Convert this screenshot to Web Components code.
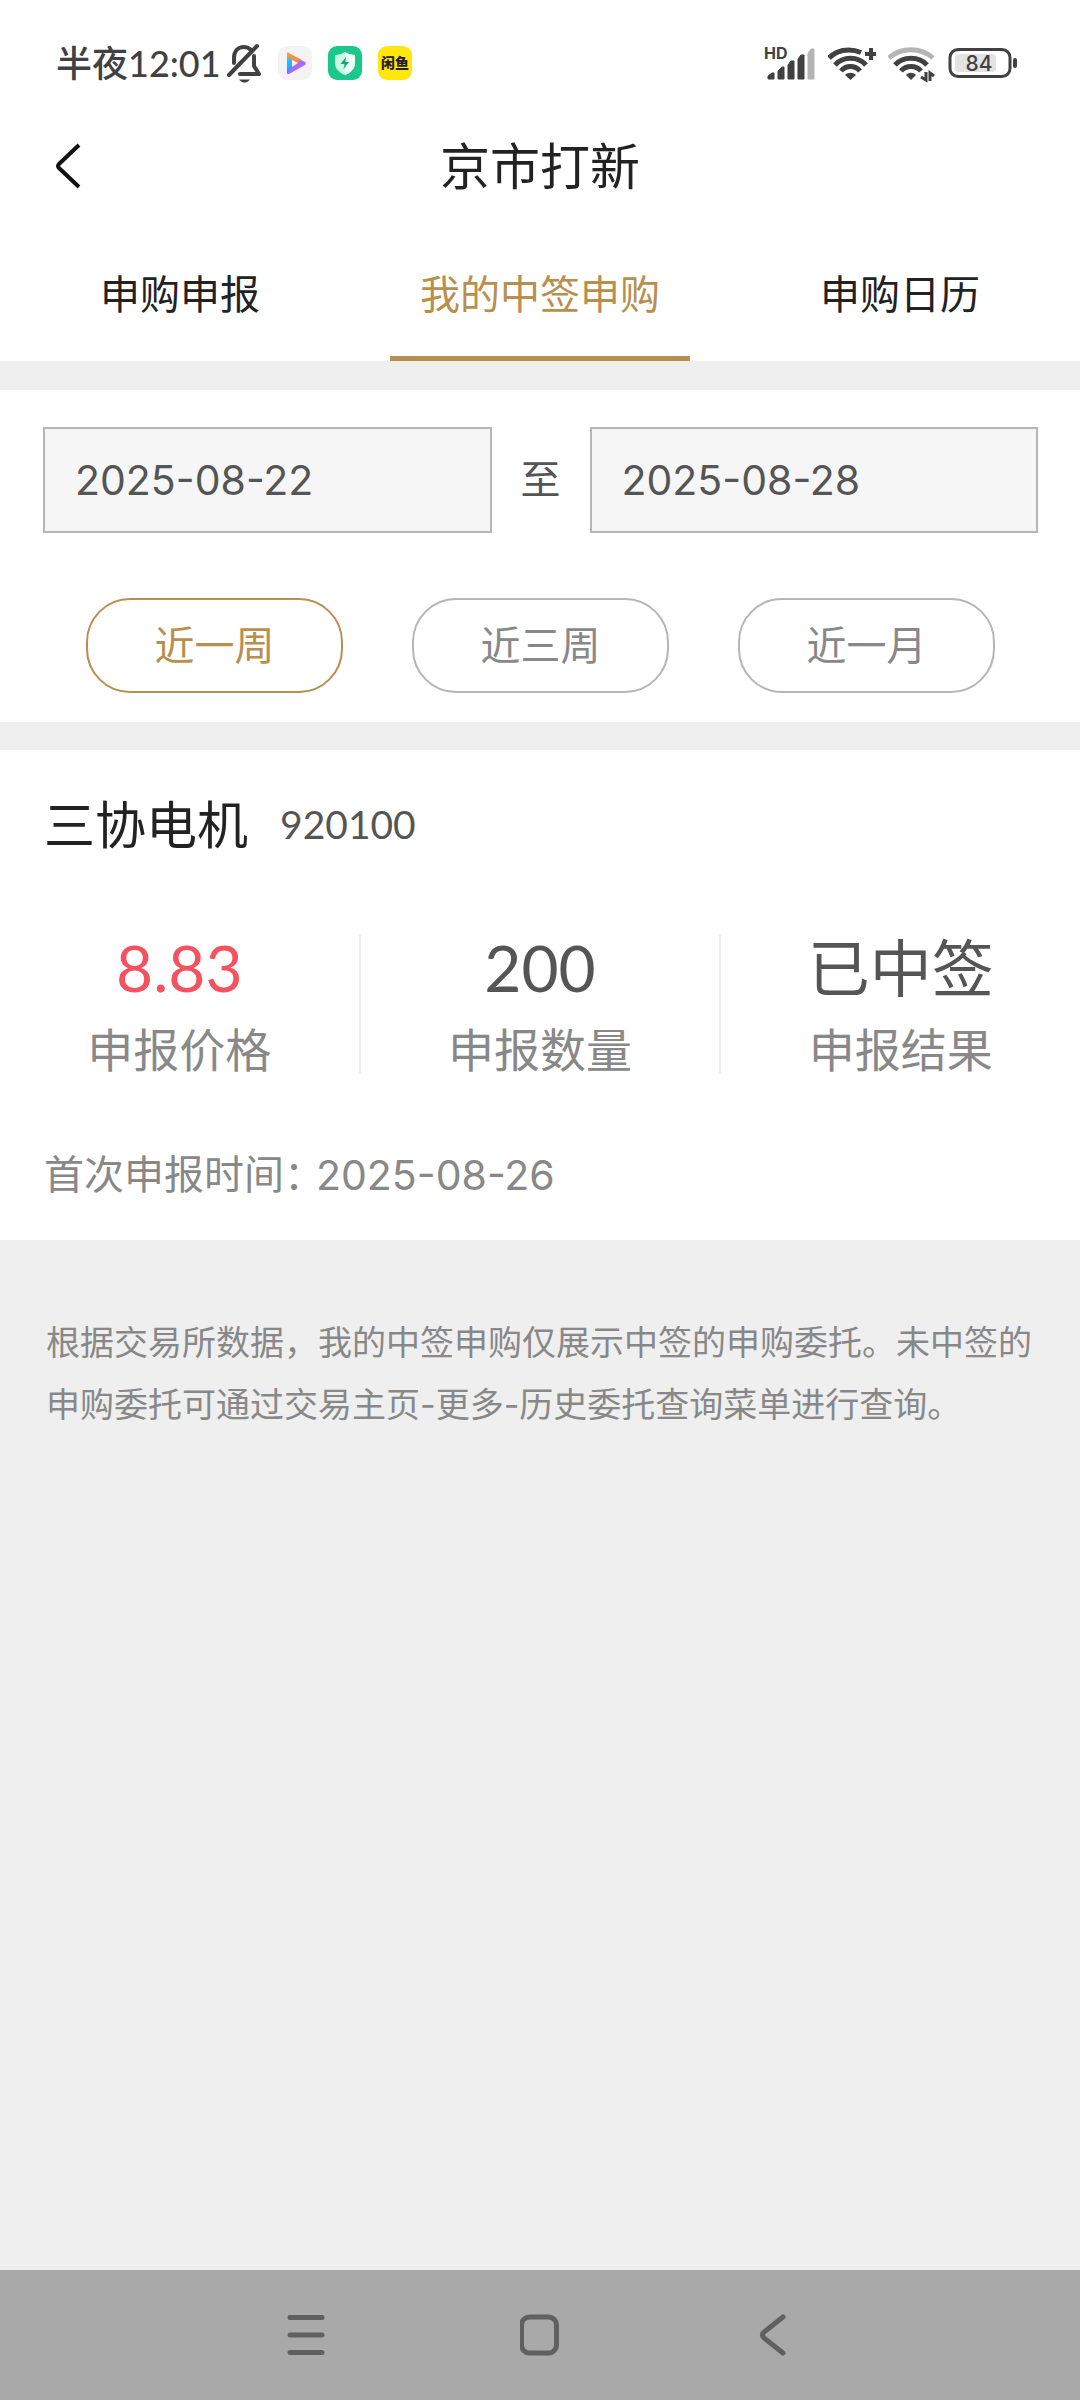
<!DOCTYPE html>
<html lang="zh-CN">
<head>
<meta charset="utf-8">
<meta name="viewport" content="width=device-width, initial-scale=1">
<title>京市打新</title>
<style>
  :root {
    --gold: #b98f50;
    --ink: #222;
    --text: #555;
    --muted: #888;
    --line: #b5b5b5;
    --page: #efefef;
    --num: Lato, "Noto Sans CJK SC", sans-serif;
    --date: Inter, "Noto Sans CJK SC", sans-serif;
  }
  html, body { margin: 0; }
  body { font-family: Inter, "Noto Sans CJK SC", sans-serif; background: var(--page); color: var(--ink); }
</style>
</head>
<body>
<ipo-app></ipo-app>
<script>
  const define = (name, html, setup) => {
    const template = document.createElement('template');
    template.innerHTML = '<style>*{box-sizing:border-box}button{font:inherit;color:inherit;background:none;border:0;padding:0;margin:0}svg{display:block;flex:none}</style>' + html;
    customElements.define(name, class extends HTMLElement {
      constructor() {
        super();
        this.attachShadow({ mode: 'open' }).append(template.content.cloneNode(true));
      }
      connectedCallback() { if (setup) setup(this, this.shadowRoot); }
    });
  };

  define('status-bar', `
    <style>
      :host { display: flex; justify-content: space-between; align-items: center; height: 126px; padding: 0 62px 0 56px; color: #414141; }
      .side { display: flex; align-items: center; }
      .left { gap: 16px; }
      .right { gap: 12px; }
      .clock { display: flex; align-items: center; gap: 5px; font-size: 36px; line-height: 40px; }
      .clock span { font-family: Lato, "Noto Sans CJK SC", sans-serif; font-weight: 500; }
      text { font-family: Inter, "Noto Sans CJK SC", sans-serif; }
    </style>
    <div class="side left">
      <div class="clock"><span>半夜12:01</span>
        <svg width="36" height="40" viewBox="0 0 36 40" fill="none" stroke="#414141" stroke-width="4" stroke-linecap="round" stroke-linejoin="round">
          <path d="M8 20V15C8 8 12 4 18 4C21 4 23 5 25 7M28 13V23L33 31H14"/><path d="M3 32L31 3"/><path d="M13 36.500H24C22 39 20 39.500 18.500 39.500S15 39 13 36.500Z" fill="#414141" stroke="none"/>
        </svg>
      </div>
      <svg width="34" height="34" viewBox="0 0 34 34">
        <defs><linearGradient id="o" x1="0" y1="0" x2="1" y2="1"><stop stop-color="#ff9f2e"/><stop offset="1" stop-color="#ff7a52"/></linearGradient>
        <linearGradient id="b" x1="0" y1="0" x2="0" y2="1"><stop stop-color="#25d0ff"/><stop offset="1" stop-color="#318aff"/></linearGradient></defs>
        <rect width="34" height="34" rx="9" fill="#f3f3f4"/>
        <path d="M9 7C9 6 10 6 11 7L24 14L20 19L9 12Z" fill="url(#o)"/>
        <path d="M9 10L14 14V23L9 28Z" fill="url(#b)"/>
        <path d="M9 28L14 20L23 14L27 16C28 17 28 18 27 19L11 28C10 28 9 28 9 28Z" fill="#a86bf5"/>
        <path d="M14 14L20 17L14 21Z" fill="#f3f0fa"/>
      </svg>
      <svg width="34" height="34" viewBox="0 0 34 34">
        <rect width="34" height="34" rx="9" fill="#1bc88b"/>
        <path d="M17 6C20 8 23 9 27 9V17C27 23 22 27 17 29C12 27 7 23 7 17V9C11 9 14 8 17 6Z" fill="#c9fae6"/>
        <path d="M17 6C20 8 23 9 27 9V17C27 23 22 27 17 29Z" fill="#effff9"/>
        <path d="M18 11L12.500 18H16.500L15.500 23L21 16H17.500Z" fill="#16a874"/>
      </svg>
      <svg width="34" height="34" viewBox="0 0 34 34">
        <rect width="34" height="34" rx="9" fill="#ffe60f"/>
        <text x="17" y="22" text-anchor="middle" font-size="14" font-weight="900" fill="#222">闲鱼</text>
      </svg>
    </div>
    <div class="side right">
      <svg width="52" height="40" viewBox="0 0 52 40" fill="#414141">
        <text x="0" y="16" font-size="16" font-weight="700">HD</text>
        <path d="M4 36V33L8 30H10V36ZM14 36V28L18 24H20V36ZM24 36V22L27 18H30V36ZM34 36V16L37 12H40V36Z" stroke="#414141" stroke-width="1" stroke-linejoin="round"/>
        <path d="M44 36V10L47 6H50V36Z" fill="#b5b5b5" stroke="#b5b5b5" stroke-width="1" stroke-linejoin="round"/>
      </svg>
      <svg width="48" height="40" viewBox="0 0 48 40" fill="none" stroke="#414141" stroke-width="5">
        <path d="M1 15C8 8 20 4 33 9.500M7 22C15 13 30 13 38 22M13 28C18 22 27 22 32 28"/>
        <path d="M17 32C20 29 25 29 28 32L22.500 37Z" fill="#414141" stroke="none"/>
        <path d="M43 5V17M37 11H49" stroke-width="4"/>
      </svg>
      <svg width="48" height="40" viewBox="0 0 48 40" fill="none" stroke="#414141" stroke-width="5">
        <path d="M1 15C13 4 33 4 45 15" stroke="#b5b5b5"/>
        <path d="M7 22C15 13 31 13 39 22M13 28C18 22 28 22 33 28"/>
        <path d="M18 32C21 29 25 29 28 32L23 37Z" fill="#414141" stroke="none"/>
        <path d="M38 29V37L33 34M42 38V30L46 33" stroke-width="3"/>
      </svg>
      <svg width="70" height="40" viewBox="0 0 70 40">
        <rect x="2" y="6.500" width="60" height="27" rx="8" fill="none" stroke="#414141" stroke-width="3"/>
        <rect x="7" y="11" width="41" height="18" rx="4" fill="#e3e3e3"/>
        <rect x="65" y="15" width="4" height="10" rx="2" fill="#414141"/>
        <text x="31" y="28" text-anchor="middle" font-size="21" font-weight="500" fill="#414141">84</text>
      </svg>
    </div>`);

  define('title-bar', `
    <style>
      :host { display: grid; grid-template-columns: 1fr auto 1fr; align-items: center; height: 82px; padding: 0 52px; }
      button { width: 32px; height: 48px; }
      h1 { margin: 0; font-size: 50px; line-height: 60px; font-weight: 400; }
    </style>
    <button aria-label="返回"><svg width="32" height="48" viewBox="0 0 32 48" fill="none" stroke="#111" stroke-width="4"><path d="M27 2L7 21Q5 23 7 25L27 44"/></svg></button>
    <h1><slot></slot></h1>`);

  define('tab-bar', `
    <style>:host { display: flex; height: 153px; padding-top: 20px; }</style>
    <slot></slot>`);

  define('tab-item', `
    <style>
      :host { flex: 1; display: flex; justify-content: center; }
      button { position: relative; min-width: 300px; font-size: 40px; line-height: 48px; }
      :host([active]) button { color: var(--gold); }
      :host([active]) button::after { content: ""; position: absolute; left: 0; right: 0; bottom: 0; height: 5px; background: var(--gold); }
    </style>
    <button><slot></slot></button>`);

  define('date-field', `
    <style>
      :host { flex: 1; display: flex; min-width: 0; }
      input { width: 100%; height: 106px; margin: 0; padding: 0 30px; border: 2px solid var(--line); border-radius: 0; background: #f6f6f6; color: var(--text); font: 400 41px/48px var(--date); outline: 0; }
    </style>
    <input type="text" readonly>`, (host, root) => {
      const input = root.querySelector('input');
      input.value = host.getAttribute('value');
      input.setAttribute('aria-label', host.getAttribute('label'));
    });

  define('range-pill', `
    <style>
      :host { flex: 1; display: flex; }
      button { flex: 1; height: 95px; border: 2px solid var(--line); border-radius: 44px; font-size: 40px; line-height: 48px; color: var(--muted); }
      :host([active]) button { border-color: var(--gold); color: var(--gold); }
    </style>
    <button><slot></slot></button>`);

  define('date-filter', `
    <style>
      :host { display: block; background: #fff; padding: 37px 42px 29px 43px; }
      .dates { display: flex; align-items: center; gap: 29px; font-size: 40px; line-height: 48px; color: var(--text); }
      .ranges { display: flex; gap: 69px; padding: 65px 43px 0; }
    </style>
    <div class="dates">
      <date-field label="开始日期" value="2025-08-22"></date-field><span>至</span><date-field label="结束日期" value="2025-08-28"></date-field>
    </div>
    <div class="ranges"><slot></slot></div>`);

  define('stat-cell', `
    <style>
      :host { flex: 1; display: flex; flex-direction: column; align-items: center; color: var(--text); border-right: 2px solid #eee; }
      :host(:last-of-type) { border-right: 0; }
      .value { font: 400 62px/66px var(--num); }
      :host([numeric]) .value { font-size: 64px; }
      :host([tone="up"]) .value { color: #f5525f; }
      .label { font-size: 46px; line-height: 46px; padding-top: 26px; color: var(--muted); }
    </style>
    <div class="value"><slot></slot></div>
    <div class="label"><slot name="label"></slot></div>`);

  define('allotment-card', `
    <style>
      :host { display: block; background: #fff; padding: 44px 0 35px; }
      header { display: flex; align-items: flex-start; gap: 32px; padding: 0 44px; }
      h2 { margin: 0; font-size: 51px; line-height: 64px; font-weight: 400; }
      .code { font: 400 39px/60px var(--num); color: var(--text); }
      .stats { display: flex; padding: 77px 0 72px; }
      footer { display: flex; align-items: center; gap: 12px; padding: 0 44px; font-size: 40px; line-height: 60px; color: var(--muted); }
      .key { font-feature-settings: "palt"; }
      .date { font-size: 41px; }
    </style>
    <header><h2><slot name="name"></slot></h2><span class="code"><slot name="code"></slot></span></header>
    <div class="stats"><slot></slot></div>
    <footer><span class="key">首次申报时间：</span><span class="date"><slot name="date"></slot></span></footer>`);

  define('foot-note', `
    <style>
      :host { display: block; padding: 72px 46px; color: var(--muted); font-size: 34px; line-height: 62px; }
      p { margin: 0; }
    </style>
    <p><slot></slot></p>`);

  define('nav-bar', `
    <style>
      :host { display: flex; justify-content: center; align-items: center; gap: 193px; height: 130px; background: #a9a9a9; }
      button { width: 40px; height: 44px; }
    </style>
    <button aria-label="最近任务"><svg width="40" height="44" viewBox="0 0 40 44" fill="none" stroke="#606060" stroke-width="5" stroke-linecap="round"><path d="M3 4.500H35M3 22H35M3 39.500H35"/></svg></button>
    <button aria-label="主屏幕"><svg width="40" height="44" viewBox="0 0 40 44" fill="none" stroke="#606060" stroke-width="5"><rect x="1.500" y="4" width="35" height="36" rx="8"/></svg></button>
    <button aria-label="后退"><svg width="40" height="44" viewBox="0 0 40 44" fill="none" stroke="#606060" stroke-width="5" stroke-linecap="round"><path d="M30 4L11 19Q8 22 11 25L30 40"/></svg></button>`);

  define('ipo-app', `
    <style>
      :host { display: flex; flex-direction: column; min-height: 100vh; }
      .top { background: #fff; }
      main { flex: 1; display: flex; flex-direction: column; padding-top: 29px; }
      allotment-card { margin-top: 28px; }
    </style>
    <div class="top">
      <status-bar></status-bar>
      <title-bar>京市打新</title-bar>
      <tab-bar><tab-item>申购申报</tab-item><tab-item active>我的中签申购</tab-item><tab-item>申购日历</tab-item></tab-bar>
    </div>
    <main>
      <date-filter><range-pill active>近一周</range-pill><range-pill>近三周</range-pill><range-pill>近一月</range-pill></date-filter>
      <allotment-card>
        <span slot="name">三协电机</span><span slot="code">920100</span>
        <stat-cell numeric tone="up">8.83<span slot="label">申报价格</span></stat-cell>
        <stat-cell numeric>200<span slot="label">申报数量</span></stat-cell>
        <stat-cell>已中签<span slot="label">申报结果</span></stat-cell>
        <span slot="date">2025-08-26</span>
      </allotment-card>
      <foot-note>根据交易所数据，我的中签申购仅展示中签的申购委托。未中签的申购委托可通过交易主页-更多-历史委托查询菜单进行查询。</foot-note>
    </main>
    <nav-bar></nav-bar>`);
</script>
</body>
</html>
